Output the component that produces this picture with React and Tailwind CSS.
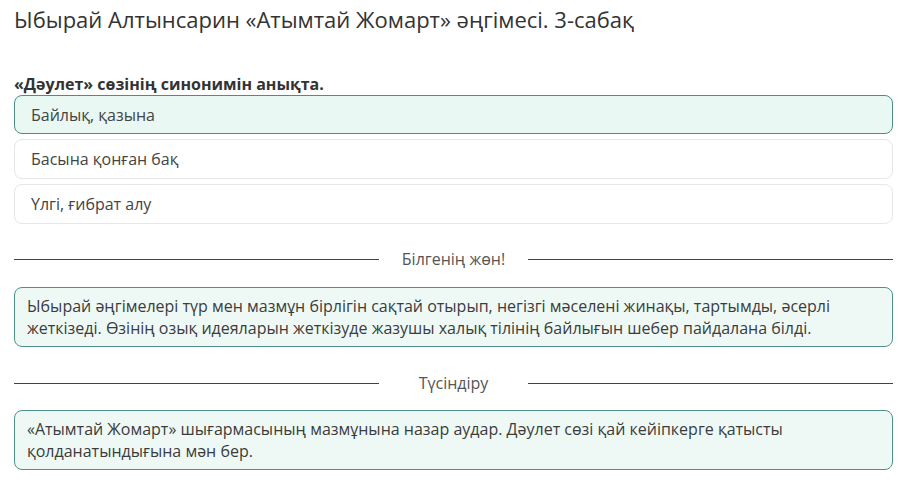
import React from "react";

const options = [
  { text: "Байлық, қазына", correct: true },
  { text: "Басына қонған бақ", correct: false },
  { text: "Үлгі, ғибрат алу", correct: false },
];

function Divider({ label }) {
  return (
    <div className="flex items-center">
      <div className="flex-1 h-px bg-[#444]" />
      <div className="w-[149px] text-center text-[16px] leading-[24px] text-[#555]">{label}</div>
      <div className="flex-1 h-px bg-[#444]" />
    </div>
  );
}

function InfoBox({ children }) {
  return (
    <div className="border border-[#4f918a] bg-[#eef9f6] rounded-lg pl-[12px] pr-4 pt-[7px] pb-[7px] text-[16px] leading-[22px] text-[#3c3c3c]">
      {children}
    </div>
  );
}

export default function App() {
  return (
    <div className="min-h-screen bg-white pl-[14px] pr-[12px] pt-[4px] font-['Open_Sans',sans-serif] text-[#333]">
      <h1 className="text-[22px] leading-[30px] text-[#333]">
        Ыбырай Алтынсарин «Атымтай Жомарт» әңгімесі. 3-сабақ
      </h1>

      <div className="mt-[40px] text-[16px] leading-[20px] font-bold text-[#333]">
        «Дәулет» сөзінің синонимін анықта.
      </div>

      <div className="flex flex-col gap-[5px] mt-[1px]">
        {options.map((o, i) => (
          <div
            key={o.text}
            className={
              o.correct
                ? "h-[39px] flex items-center pl-4 rounded-lg border border-[#4f8c84] bg-[#eaf8f3] text-[16px] text-[#444]"
                : "h-[40px] flex items-center pl-4 rounded-lg border border-[#e6e6e6] bg-white text-[16px] text-[#444]"
            }
          >
            {o.text}
          </div>
        ))}
      </div>

      <div className="mt-[23px]">
        <Divider label="Білгенің жөн!" />
      </div>

      <div className="mt-[16px]">
        <InfoBox>
          Ыбырай әңгімелері түр мен мазмұн бірлігін сақтай отырып, негізгі мәселені жинақы, тартымды, әсерлі
          <br />
          жеткізеді. Өзінің озық идеяларын жеткізуде жазушы халық тілінің байлығын шебер пайдалана білді.
        </InfoBox>
      </div>

      <div className="mt-[24px]">
        <Divider label="Түсіндіру" />
      </div>

      <div className="mt-[15px]">
        <InfoBox>
          «Атымтай Жомарт» шығармасының мазмұнына назар аудар. Дәулет сөзі қай кейіпкерге қатысты
          <br />
          қолданатындығына мән бер.
        </InfoBox>
      </div>
    </div>
  );
}
